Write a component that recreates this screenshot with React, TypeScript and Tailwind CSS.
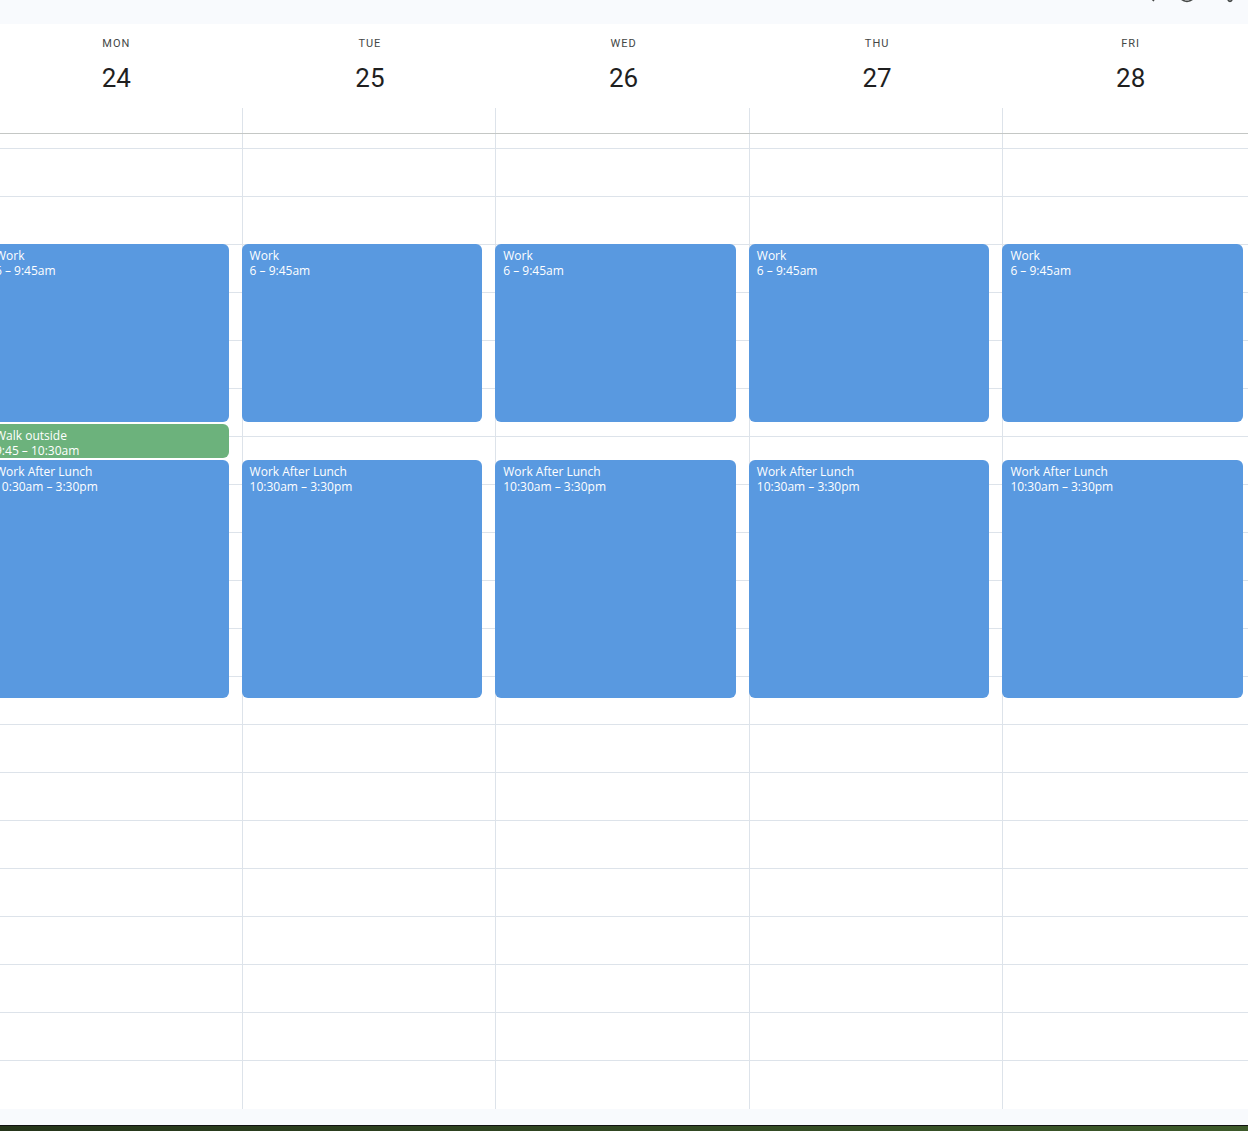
import React from "react";
import { Search, CircleHelp, Settings } from "lucide-react";

const days = [
  { name: "MON", num: "24" },
  { name: "TUE", num: "25" },
  { name: "WED", num: "26" },
  { name: "THU", num: "27" },
  { name: "FRI", num: "28" },
];

const rows = Array.from({ length: 19 }, (_, i) => i);

function Event({
  top,
  height,
  title,
  time,
  green,
}: {
  top: number;
  height: number;
  title: string;
  time: string;
  green?: boolean;
}) {
  return (
    <div
      className={
        "absolute left-[-1px] right-[13px] rounded-[6px] px-[8px] pt-[4px] text-[12px] leading-[15px] text-white overflow-hidden " +
        (green ? "bg-[#6cb27c]" : "bg-[#5999e0]")
      }
      style={{ top, height, fontFamily: "'Open Sans', Roboto, Arial, sans-serif" }}
    >
      <div className="whitespace-nowrap">{title}</div>
      <div className="whitespace-nowrap">{time}</div>
    </div>
  );
}

export default function App() {
  return (
    <div
      className="w-[1248px] h-[1131px] overflow-hidden bg-[#f8fafd] flex flex-col"
      style={{ fontFamily: "Roboto, 'Open Sans', Arial, sans-serif" }}
    >
      {/* top band */}
      <div className="relative h-[24px] shrink-0">
        <Search className="absolute left-[1136px] top-[-17px] text-[#444746]" size={20} strokeWidth={2} />
        <CircleHelp className="absolute left-[1177px] top-[-17px] text-[#444746]" size={20} strokeWidth={2} />
        <Settings className="absolute left-[1220px] top-[-17px] text-[#444746]" size={20} strokeWidth={2} />
      </div>

      {/* calendar surface */}
      <div className="bg-white h-[1085px] shrink-0 overflow-hidden">
        <div className="ml-[-12px] w-[1268px] flex flex-col">
          {/* header */}
          <div className="grid grid-cols-5 h-[84px]">
            {days.map((d) => (
              <div key={d.name} className="flex flex-col items-center pt-[13px] pl-[3px]">
                <div className="text-[11px] leading-[14px] font-normal tracking-[1px] text-[#444746]">
                  {d.name}
                </div>
                <div className="mt-[11px] text-[26px] leading-[32px] text-[#1f1f1f]">{d.num}</div>
              </div>
            ))}
          </div>
          <div className="grid grid-cols-5 h-[25px]">
            {days.map((d, i) => (
              <div key={d.name} className={i > 0 ? "border-l border-[#dde3ea]" : ""} />
            ))}
          </div>
          <div className="h-px bg-[#c4c7c5]" />

          {/* body */}
          <div className="grid grid-cols-5 h-[975px]">
            {days.map((d, i) => (
              <div
                key={d.name}
                className={"relative flex flex-col " + (i > 0 ? "border-l border-[#dde3ea]" : "")}
              >
                <div className="h-[15px] border-b border-[#dde3ea]" />
                {rows.map((r) => (
                  <div key={r} className="h-[48px] border-b border-[#dde3ea]" />
                ))}
                <div className="flex-1" />
                <Event top={110} height={178} title="Work" time="6 – 9:45am" />
                {i === 0 && (
                  <Event top={290} height={34} title="Walk outside" time="9:45 – 10:30am" green />
                )}
                <Event top={326} height={238} title="Work After Lunch" time="10:30am – 3:30pm" />
              </div>
            ))}
          </div>
        </div>
      </div>

      {/* bottom band */}
      <div className="h-[16px] shrink-0 bg-[#f8fafd]" />
      <div className="h-px shrink-0 bg-[#111111]" />
      <div className="flex-1 bg-gradient-to-r from-[#25351a] to-[#3d5a2a]" />
    </div>
  );
}
